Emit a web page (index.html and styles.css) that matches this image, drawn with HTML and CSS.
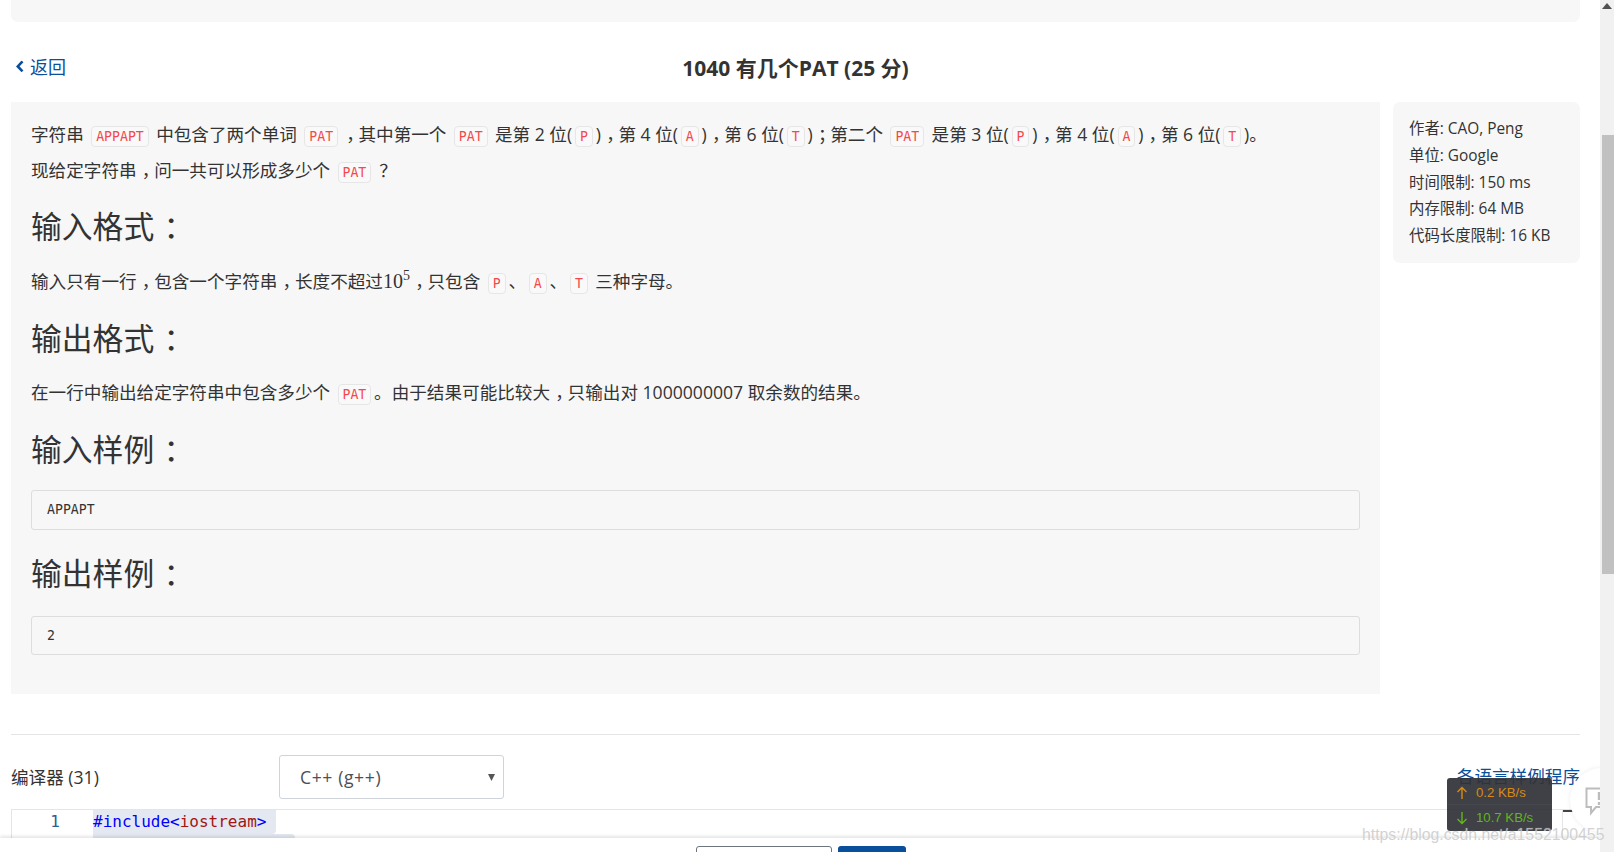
FILE: index.html
```html
<!DOCTYPE html>
<html lang="zh-CN">
<head>
<meta charset="utf-8">
<title>1040 有几个PAT (25 分)</title>
<link rel="stylesheet" href="styles.css">
</head>
<body>
<div class="page">
  <main class="main">
    <div class="topbox"></div>
    <div class="titlerow">
      <a class="back"><svg class="chev" viewBox="0 0 8 12" width="8" height="12"><path d="M6.5 1 L1.8 6 L6.5 11" fill="none" stroke="#0a4f9b" stroke-width="2.6"/></svg>返回</a>
      <h1 class="title">1040 有几个PAT (25 分)</h1>
    </div>
    <div class="columns">
      <section class="desc">
        <p>字符串 <code>APPAPT</code> 中包含了两个单词 <code>PAT</code><span class="mid">，</span>其中第一个 <code>PAT</code> 是第 2 位(<code>P</code>)<span class="mid">，</span>第 4 位(<code>A</code>)<span class="mid">，</span>第 6 位(<code>T</code>)<span class="mid">；</span>第二个 <code>PAT</code> 是第 3 位(<code>P</code>)<span class="mid">，</span>第 4 位(<code>A</code>)<span class="mid">，</span>第 6 位(<code>T</code>)。</p>
        <p>现给定字符串<span class="mid">，</span>问一共可以形成多少个 <code>PAT</code><span class="mid">？</span></p>
        <h2>输入格式<span class="colon">：</span></h2>
        <p>输入只有一行<span class="mid">，</span>包含一个字符串<span class="mid">，</span>长度不超过<span class="math">10<sup>5</sup></span><span class="mid">，</span>只包含 <code>P</code>、<code>A</code>、<code>T</code> 三种字母。</p>
        <h2>输出格式<span class="colon">：</span></h2>
        <p>在一行中输出给定字符串中包含多少个 <code>PAT</code>。由于结果可能比较大<span class="mid">，</span>只输出对 1000000007 取余数的结果。</p>
        <h2>输入样例<span class="colon">：</span></h2>
        <pre>APPAPT</pre>
        <h2>输出样例<span class="colon">：</span></h2>
        <pre class="last">2</pre>
      </section>
      <aside class="side">
        <div>作者: CAO, Peng</div>
        <div>单位: Google</div>
        <div>时间限制: 150 ms</div>
        <div>内存限制: 64 MB</div>
        <div>代码长度限制: 16 KB</div>
      </aside>
    </div>
    <hr class="rule">
    <div class="compiler">
      <label class="clabel">编译器 (31)</label>
      <div class="select">C++ (g++)<svg class="caret" viewBox="0 0 7 7" width="7" height="7"><path d="M0 0 H7 L3.5 7 Z" fill="#555"/></svg></div>
      <a class="samples">各语言样例程序</a>
    </div>
    <div class="editor">
      <div class="gutter">1</div>
      <div class="code">
        <div class="line l1"><span class="kw">#include&lt;</span><span class="str">iostream</span><span class="kw">&gt;</span></div>
        <div class="line l2">using namespace std;</div>
      </div>
      <div class="ruler"><span class="rulermark"></span></div>
    </div>
  </main>
  <div class="scrollbar">
    <svg class="sarrow" viewBox="0 0 10 6" width="10" height="6"><path d="M5 0 L10 6 H0 Z" fill="#505050"/></svg>
    <div class="thumb"></div>
  </div>
  <div class="actions">
    <span class="btn-outline"></span>
    <span class="btn-solid"></span>
  </div>
  <div class="bubble">
    <svg viewBox="0 0 30 30" width="30" height="30"><path d="M1.5 1.5 H28 V20 H11 L6 26 V20 H1.5 Z" fill="none" stroke="#bdbdbd" stroke-width="2"/><path d="M14 5 V13 M14 15 V18" stroke="#bdbdbd" stroke-width="2.4"/></svg>
  </div>
  <div class="speed">
    <div class="srow up"><svg viewBox="0 0 12 14" width="12" height="14"><path d="M6 13 V1.5 M1.5 6 L6 1.5 L10.5 6" fill="none" stroke="#d98a12" stroke-width="1.4"/></svg>0.2 KB/s</div>
    <div class="srow down"><svg viewBox="0 0 12 14" width="12" height="14"><path d="M6 1 V12.5 M1.5 8 L6 12.5 L10.5 8" fill="none" stroke="#62b51c" stroke-width="1.4"/></svg>10.7 KB/s</div>
  </div>
  <div class="watermark">https://blog.csdn.net/a1552100455</div>
</div>
</body>
</html>
```
FILE: styles.css
```css
* { box-sizing: border-box; }
html, body { margin: 0; height: 100%; overflow: hidden; background: #fff; }
body { font-family: "Open Sans", "Noto Sans CJK SC", sans-serif; font-size: 17.6px; color: #333; }
.page { position: relative; display: flex; width: 1614px; height: 852px; overflow: hidden; }
.main { width: 1600px; height: 852px; padding: 0 20px 0 11px; overflow: hidden; flex: none; }
.topbox { height: 22px; background: #f7f7f7; border-radius: 0 0 7px 7px; }
.titlerow { position: relative; display: flex; align-items: center; justify-content: center; height: 68px; margin: 11px 0 1px; }
.back { position: absolute; left: 5px; top: 50%; transform: translateY(-52%); display: flex; align-items: center; gap: 6px; color: #0a4f9b; font-size: 18px; }
.chev { flex: none; }
.title { margin: 0; font-size: 21px; font-weight: 700; color: #333; }
.columns { display: grid; grid-template-columns: 1369px 187px; column-gap: 13px; align-items: start; }
.desc { background: #f7f7f7; padding: 15.4px 20px 41px; height: 592px; line-height: 35.2px; }
.desc p { margin: 0; }
.desc h2 { margin: 20.5px 0 18.5px; font-size: 30.8px; font-weight: 400; line-height: 37px; color: #333; }
.colon { display: inline-block; width: 1em; padding-left: .3em; }
.mid { display: inline-block; width: 1em; padding-left: .3em; }
.math { font-family: "Liberation Serif", serif; font-size: 20px; line-height: 1; }
.math sup { font-size: 14px; line-height: 0; }
code { font-family: "DejaVu Sans Mono", monospace; font-size: 13.2px; line-height: 1; color: #f5484a; background: #f9f9f9; border: 1px solid #e6e6e6; border-radius: 4px; padding: 2px 3.9px; margin: 0 2.9px; }
pre { margin: 22.5px 0 0; height: 39.5px; padding: 0 15px; font-family: "DejaVu Sans Mono", monospace; font-size: 13.2px; line-height: 37.5px; color: #333; background: #f7f7f7; border: 1px solid #ddd; border-radius: 3px; }
pre.last { margin-top: 24.5px; height: 38.5px; }
.desc pre + h2 { margin: 25px 0 0; }
.desc h2:nth-of-type(3) { margin-bottom: 0; }
.side { background: #f7f7f7; border-radius: 7px; padding: 14.2px 16px 13px; font-size: 15.4px; line-height: 26.7px; }
.rule { margin: 40px 0 0; border: 0; border-top: 1px solid #e5e5e5; height: 1px; }
.compiler { display: flex; align-items: center; height: 44px; margin-top: 20px; }
.clabel { width: 268px; flex: none; margin-top: -2px; }
.select { display: flex; align-items: center; justify-content: space-between; width: 225px; height: 44px; padding: 0 8px 0 20px; background: #fff; border: 1px solid #ced4da; border-radius: 3px; color: #495057; letter-spacing: .6px; }
.caret { flex: none; }
.samples { margin: -3px 0 0 auto; color: #0a4f9b; }
.editor { display: flex; margin-top: 10px; height: 40px; border-top: 1px solid #e5e5e5; border-left: 1px solid #e5e5e5; }
.gutter { width: 81px; flex: none; padding-right: 33px; text-align: right; font-family: "DejaVu Sans Mono", monospace; font-size: 16px; line-height: 24px; color: #2b5f8e; }
.code { flex: 1; font-family: "DejaVu Sans Mono", monospace; font-size: 16px; line-height: 24px; color: #00f; }
.line { width: max-content; padding-right: 10px; background: #e4e8f0; }
.l1 { border-radius: 0 0 4px 0; }
.l2 { border-radius: 0 4px 0 0; padding-right: 9px; }
.kw { color: #00f; }
.str { color: #a31515; }
.ruler { width: 18px; flex: none; border-left: 1px solid #e5e5e5; }
.rulermark { display: block; width: 11px; height: 2px; background: #444; }
.scrollbar { position: relative; z-index: 2; width: 14px; height: 852px; flex: none; background: #f1f1f1; }
.sarrow { display: block; margin: 3px 0 0 2px; }
.thumb { margin: 126px 0 0 2px; height: 439px; background: #c1c1c1; }
.actions { position: absolute; left: 0; right: 14px; bottom: 0; height: 14px; display: flex; justify-content: center; gap: 6px; padding: 8px 0 0 2px; background: #fff; box-shadow: 0 -2px 3px rgba(0,0,0,.1); }
.btn-outline { width: 136px; height: 20px; border: 1px solid #6c757d; border-radius: 3px; background: #fff; }
.btn-solid { width: 68px; height: 20px; border-radius: 3px; background: #0a4f9b; }
.bubble { position: absolute; left: 1570px; top: 768px; width: 64px; height: 64px; padding: 19px 0 0 15px; border-radius: 50%; background: #fff; box-shadow: 0 0 5px rgba(0,0,0,.08); }
.speed { position: absolute; left: 1447px; top: 778px; width: 105px; height: 53px; border-radius: 3px; background: rgba(48,51,56,.93); font-family: "Liberation Sans", sans-serif; font-size: 13.2px; }
.srow { display: flex; align-items: center; gap: 8px; height: 26.5px; padding-left: 9px; }
.up { color: #d98a12; border-bottom: 1px solid #45484c; padding-top: 4px; }
.down { color: #62b51c; }
.watermark { position: absolute; left: 1362px; top: 824px; z-index: 3; font-family: "Liberation Sans", sans-serif; font-size: 15.8px; line-height: 22px; color: rgba(190,190,190,.7); white-space: nowrap; text-shadow: 0 0 1px rgba(255,255,255,.5); }
```
